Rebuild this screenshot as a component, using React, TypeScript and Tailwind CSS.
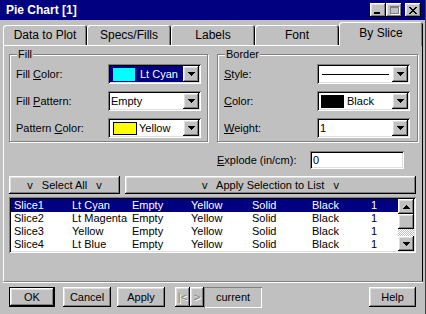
import React from "react";

const RAISED =
  "shadow-[inset_-1px_-1px_0_#000,inset_1px_1px_0_#fff,inset_-2px_-2px_0_#808080,inset_2px_2px_0_#dfdfdf]";
const SUNKEN =
  "shadow-[inset_1px_1px_0_#808080,inset_-1px_-1px_0_#fff,inset_2px_2px_0_#000,inset_-2px_-2px_0_#dfdfdf]";

function Tri({ up }: { up?: boolean }) {
  const rows = [7, 5, 3, 1];
  return (
    <svg width="7" height="4" viewBox="0 0 7 4" shapeRendering="crispEdges">
      {rows.map((w, i) => (
        <rect key={i} x={(7 - w) / 2} y={up ? 3 - i : i} width={w} height={1} fill="#000" />
      ))}
    </svg>
  );
}

function Combo({ children, className = "" }: { children?: React.ReactNode; className?: string }) {
  return (
    <div className={`w-[93px] h-[20px] bg-white p-[2px] flex ${SUNKEN}`}>
      <div className={`flex-1 min-w-0 flex items-center ${className}`}>{children}</div>
      <div className={`w-[16px] h-full bg-[#c0c0c0] flex items-center justify-center ${RAISED}`}>
        <Tri />
      </div>
    </div>
  );
}

function Row({ label, labelW, children }: { label: React.ReactNode; labelW: string; children: React.ReactNode }) {
  return (
    <div className="flex items-center h-[20px]">
      <div className={labelW}>{label}</div>
      {children}
    </div>
  );
}

function Group({ title, width, children }: { title: string; width: string; children: React.ReactNode }) {
  return (
    <div
      className={`${width} h-[88px] border border-[#808080] shadow-[1px_1px_0_#fff,inset_1px_1px_0_#fff] flex flex-col pl-[6px]`}
    >
      <span className="-mt-[7px] self-start ml-[1px] px-[1px] bg-[#c0c0c0] leading-[13px] h-[13px]">{title}</span>
      <div className="mt-[3px] flex flex-col gap-[7px]">{children}</div>
    </div>
  );
}

const tabs = ["Data to Plot", "Specs/Fills", "Labels", "Font", "By Slice"];

const rows = [
  ["Slice1", "Lt Cyan", "Empty", "Yellow", "Solid", "Black", "1"],
  ["Slice2", "Lt Magenta", "Empty", "Yellow", "Solid", "Black", "1"],
  ["Slice3", "Yellow", "Empty", "Yellow", "Solid", "Black", "1"],
  ["Slice4", "Lt Blue", "Empty", "Yellow", "Solid", "Black", "1"],
];

export default function App() {
  return (
    <div className="w-[426px] h-[314px] bg-[#c0c0c0] overflow-hidden flex flex-col text-[11px] text-black font-['Liberation_Sans',Arial,sans-serif] leading-[13px] border-r border-r-[#404040]">
      {/* Title bar */}
      <div className="h-[20px] bg-[#000080] flex items-center pl-[6px] pr-[4px] shrink-0">
        <span className="text-white font-bold text-[12px]">Pie Chart [1]</span>
        <div className="ml-auto flex items-center">
          <div className={`w-[16px] h-[14px] bg-[#c0c0c0] flex items-end pl-[4px] pb-[3px] ${RAISED}`}>
            <div className="w-[6px] h-[2px] bg-black" />
          </div>
          <div className={`w-[16px] h-[14px] bg-[#c0c0c0] flex items-center justify-center ${RAISED}`}>
            <div className="w-[9px] h-[8px] border border-[#808080] border-t-2 shadow-[1px_1px_0_#fff]" />
          </div>
          <div className={`ml-[3px] w-[16px] h-[14px] bg-[#c0c0c0] flex items-center justify-center ${RAISED}`}>
            <svg width="8" height="7" viewBox="0 0 8 7" shapeRendering="crispEdges">
              <path d="M0 0h2v1h1v1h2V1h1V0h2v1H7v1H6v1H5v1h1v1h1v1h1v1H6V6H5V5H3v1H2v1H0V6h1V5h1V4h1V3H2V2H1V1H0z" fill="#000" />
            </svg>
          </div>
        </div>
      </div>

      {/* Tabs */}
      <div className="h-[25px] flex items-end pl-[3px] shrink-0">
        {tabs.map((t) =>
          t === "By Slice" ? (
            <div
              key={t}
              className="relative z-10 -mb-px w-[84px] h-[24px] bg-[#c0c0c0] rounded-t-[3px] shadow-[inset_1px_1px_0_#fff,inset_-1px_0_0_#000,inset_-2px_0_0_#808080] flex items-center justify-center pb-[2px] text-[12px]"
            >
              {t}
            </div>
          ) : (
            <div
              key={t}
              className="w-[84px] h-[20px] bg-[#c0c0c0] rounded-t-[3px] shadow-[inset_1px_1px_0_#fff,inset_-1px_0_0_#000,inset_-2px_0_0_#808080] flex items-center justify-center text-[12px]"
            >
              {t}
            </div>
          )
        )}
      </div>

      {/* Panel */}
      <div className="mx-[3px] w-[420px] h-[237px] shrink-0 border-t border-l border-white border-r border-r-black border-b border-b-[#808080] shadow-[0_1px_0_#fff] flex flex-col">
        <div className="mt-[8px] pl-[5px] flex gap-[9px]">
          <Group title="Fill" width="w-[199px]">
            <Row labelW="w-[92px]" label={<>Fill <span className="underline">C</span>olor:</>}>
              <Combo className="bg-[#000080] text-white">
                <div className="ml-[3px] w-[22px] h-[13px] bg-[#00ffff]" />
                <span className="ml-[5px]">Lt Cyan</span>
              </Combo>
            </Row>
            <Row labelW="w-[92px]" label={<>Fill <span className="underline">P</span>attern:</>}>
              <Combo>
                <span className="ml-[1px]">Empty</span>
              </Combo>
            </Row>
            <Row labelW="w-[92px]" label={<>Pattern <span className="underline">C</span>olor:</>}>
              <Combo>
                <div className="ml-[3px] w-[24px] h-[13px] bg-[#ffff00] border border-black" />
                <span className="ml-[2px]">Yellow</span>
              </Combo>
            </Row>
          </Group>
          <Group title="Border" width="w-[201px]">
            <Row labelW="w-[93px]" label={<><span className="underline">S</span>tyle:</>}>
              <Combo>
                <div className="ml-[3px] w-[67px] h-px bg-black" />
              </Combo>
            </Row>
            <Row labelW="w-[93px]" label={<><span className="underline">C</span>olor:</>}>
              <Combo>
                <div className="ml-[2px] w-[23px] h-[13px] bg-black" />
                <span className="ml-[3px]">Black</span>
              </Combo>
            </Row>
            <Row labelW="w-[93px]" label={<><span className="underline">W</span>eight:</>}>
              <Combo>
                <span className="ml-[1px]">1</span>
              </Combo>
            </Row>
          </Group>
        </div>

        {/* Explode */}
        <div className="mt-[9px] pl-[213px] flex items-center h-[18px]">
          <div className="w-[93px]">
            <span className="underline">E</span>xplode (in/cm):
          </div>
          <div className={`w-[94px] h-[18px] bg-white p-[2px] pl-[3px] flex items-center ${SUNKEN}`}>0</div>
        </div>

        {/* Selection buttons */}
        <div className="mt-[7px] pl-[5px] flex gap-[5px] h-[18px]">
          <div className={`w-[111px] h-full flex items-center justify-center ${RAISED}`}>
            <span className="whitespace-pre">v   Select All   v</span>
          </div>
          <div className={`w-[291px] h-full flex items-center justify-center ${RAISED}`}>
            <span className="whitespace-pre">v   Apply Selection to List   v</span>
          </div>
        </div>

        {/* List box */}
        <div className={`mt-[3px] ml-[5px] w-[407px] h-[56px] bg-white p-[2px] flex ${SUNKEN}`}>
          <div className="flex-1 flex flex-col">
            {rows.map((r, i) => (
              <div
                key={i}
                className={`h-[13px] grid grid-cols-[58px_60px_59px_61px_60px_59px_1fr] pl-[3px] items-center ${
                  i === 0 ? "bg-[#000080] text-white" : ""
                }`}
              >
                {r.map((c, j) => (
                  <span key={j} className="whitespace-nowrap">
                    {c}
                  </span>
                ))}
              </div>
            ))}
          </div>
          <div className="w-[16px] flex flex-col">
            <div className={`h-[15px] bg-[#c0c0c0] flex items-center justify-center ${RAISED}`}>
              <Tri up />
            </div>
            <div className={`h-[15px] bg-[#c0c0c0] ${RAISED}`} />
            <div className="flex-1 bg-[repeating-conic-gradient(#fff_0_25%,#c0c0c0_0_50%)] bg-[length:2px_2px]" />
            <div className={`h-[15px] bg-[#c0c0c0] flex items-center justify-center ${RAISED}`}>
              <Tri />
            </div>
          </div>
        </div>
      </div>

      {/* Bottom buttons */}
      <div className="mt-[5px] pl-[9px] pr-[9px] flex items-center h-[20px]">
        <div className="w-[46px] h-[20px] border border-black">
          <div className={`w-full h-full flex items-center justify-center ${RAISED}`}>OK</div>
        </div>
        <div className={`ml-[8px] w-[48px] h-[20px] flex items-center justify-center ${RAISED}`}>Cancel</div>
        <div className={`ml-[6px] w-[48px] h-[20px] flex items-center justify-center ${RAISED}`}>Apply</div>
        <div
          className={`ml-[10px] w-[15px] h-[20px] flex items-center justify-center text-[#808080] [text-shadow:1px_1px_0_#fff] ${RAISED}`}
        >
          |&lt;
        </div>
        <div
          className={`w-[14px] h-[20px] flex items-center justify-center text-[#808080] [text-shadow:1px_1px_0_#fff] ${RAISED}`}
        >
          &gt;
        </div>
        <div
          className="w-[58px] h-[21px] flex items-center justify-center shadow-[inset_1px_1px_0_#808080,inset_-1px_-1px_0_#fff]"
        >
          current
        </div>
        <div className={`ml-auto w-[47px] h-[20px] flex items-center justify-center ${RAISED}`}>Help</div>
      </div>
    </div>
  );
}
